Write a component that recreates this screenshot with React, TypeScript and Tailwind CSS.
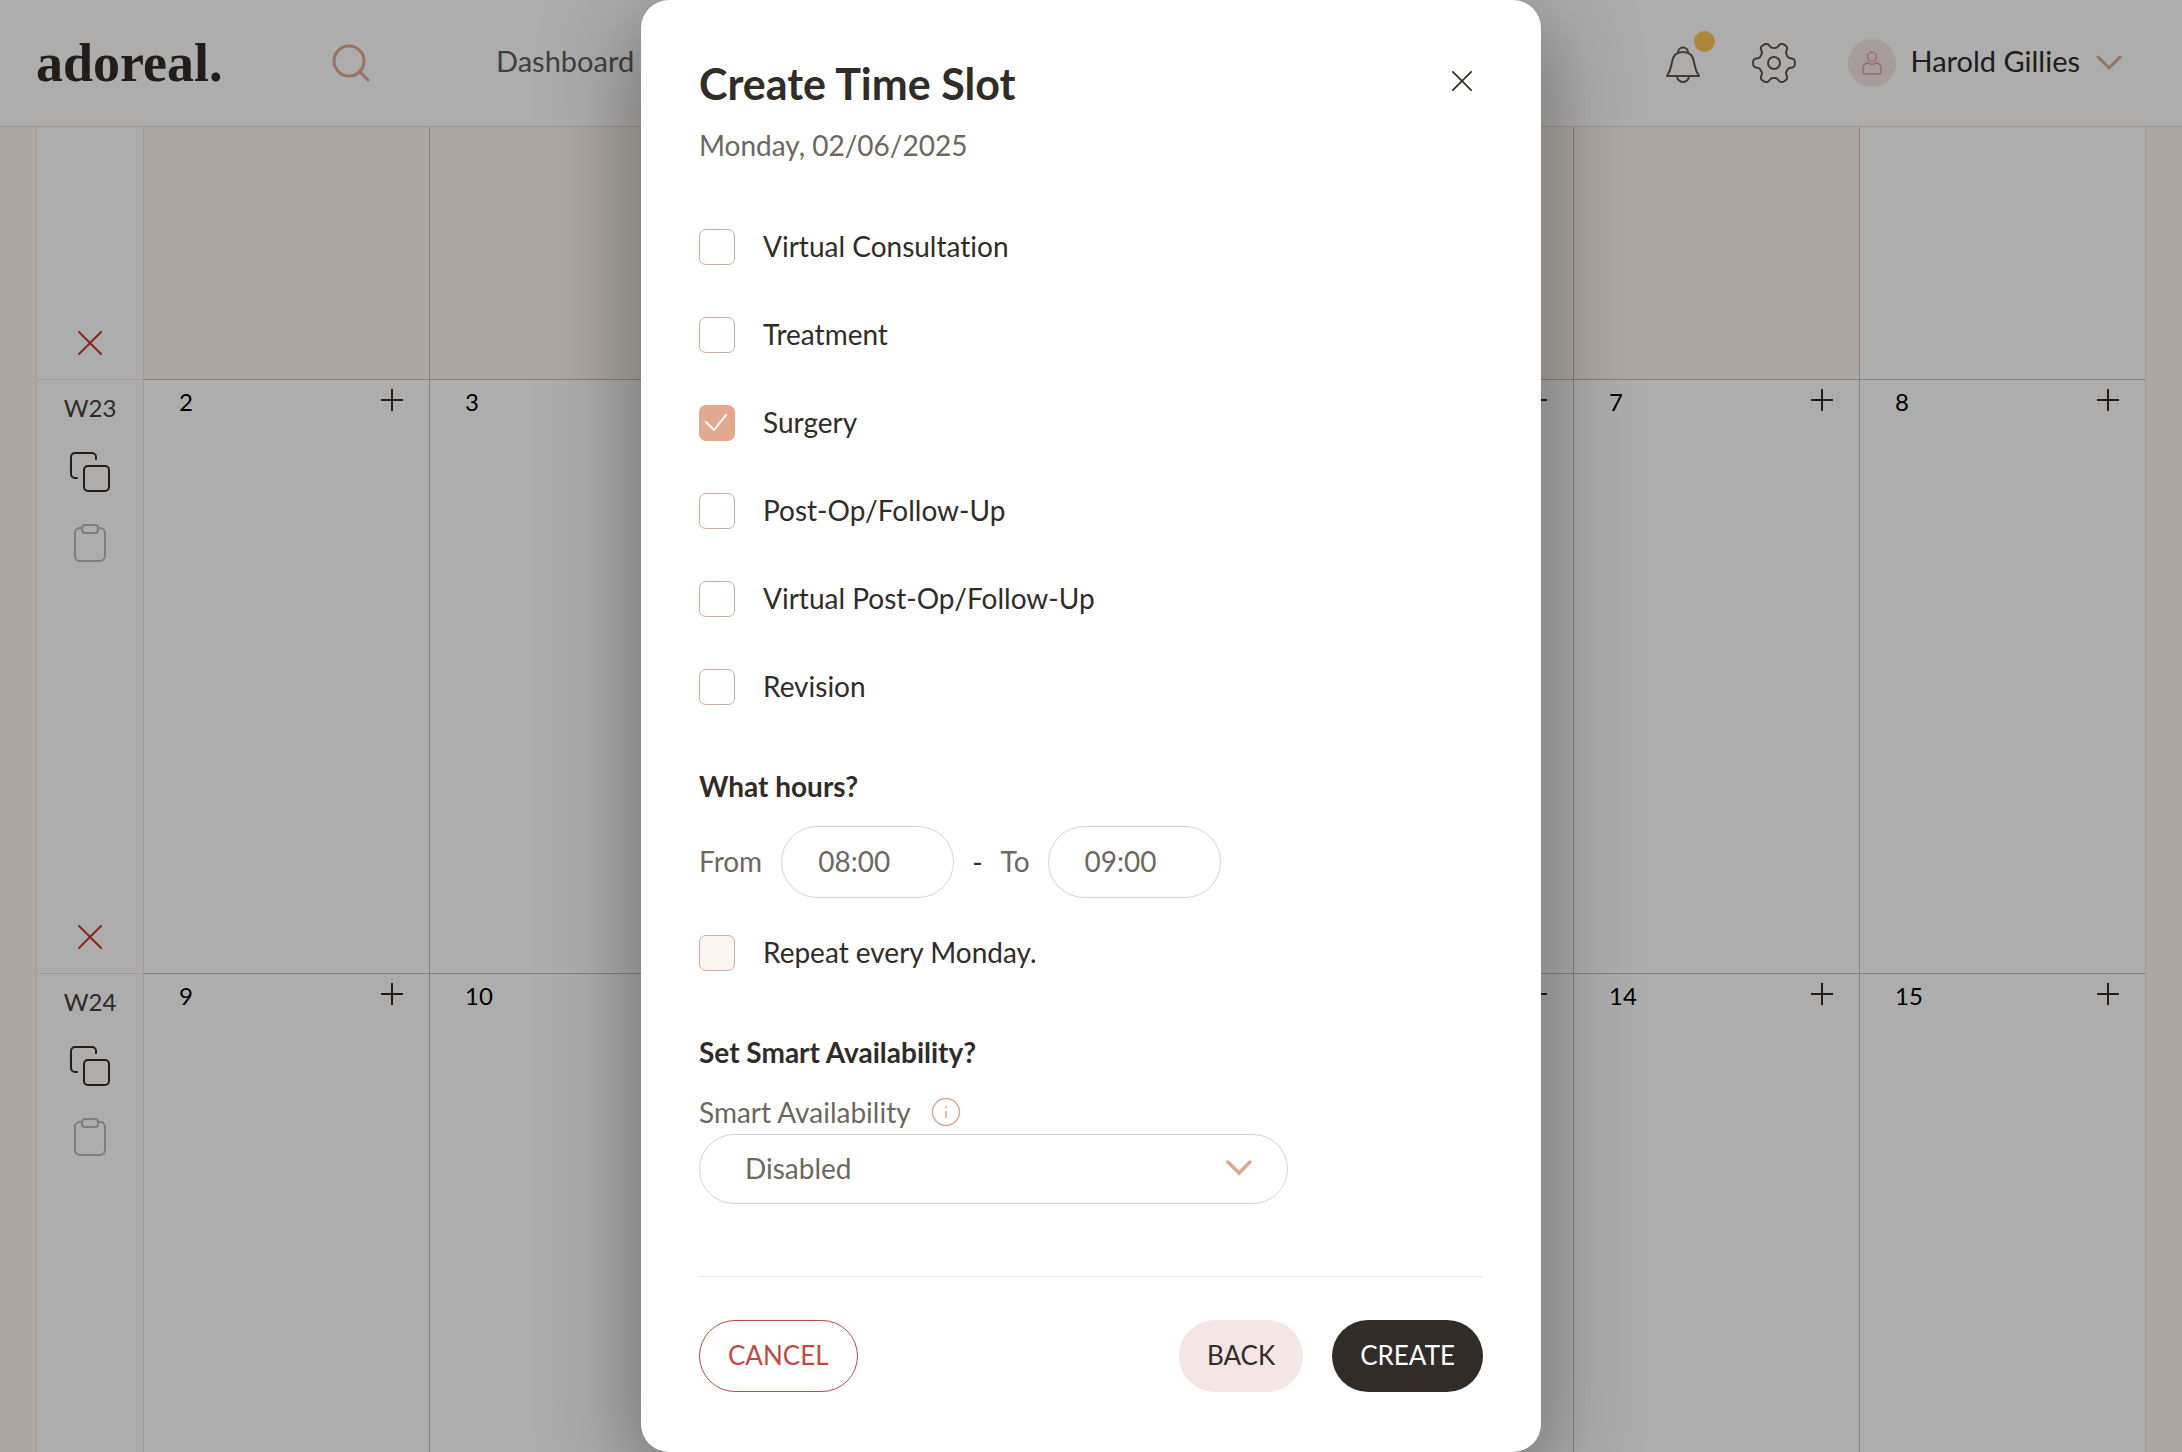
import React, { useState } from "react";

const weeks = [
  { label: "W22", first: 26, outside: true },
  { label: "W23", first: 2, outside: false },
  { label: "W24", first: 9, outside: false },
];

// Six-lobed cog outline centred in a 44x44 box, with lobes on the left and right.
const cogOutline =
  Array.from({ length: 180 }, (_, i) => {
    const a = (i / 180) * Math.PI * 2;
    const r = 18 + 3 * Math.tanh(2 * Math.cos(6 * a));
    return `${i === 0 ? "M" : "L"}${(22 + r * Math.cos(a)).toFixed(2)} ${(22 + r * Math.sin(a)).toFixed(2)}`;
  }).join("") + "Z";

function Cross({ className }: { className: string }) {
  return (
    <svg viewBox="0 0 24 24" className={className} fill="none" stroke="currentColor" strokeLinecap="round">
      <path d="M1 1 23 23M23 1 1 23" />
    </svg>
  );
}

function Chevron({ className }: { className: string }) {
  return (
    <svg viewBox="0 0 26 16" className={className} fill="none" stroke="currentColor" strokeLinecap="round">
      <path d="M2 2 13 13 24 2" />
    </svg>
  );
}

function CopyIcon() {
  return (
    <svg viewBox="0 0 40 40" className="size-10" fill="none" stroke="currentColor" strokeWidth="2" strokeLinecap="round">
      <path d="M7 26H5a4 4 0 0 1-4-4V5a4 4 0 0 1 4-4h17a4 4 0 0 1 4 4v2" />
      <rect x="14" y="14" width="25" height="25" rx="4" />
    </svg>
  );
}

function PasteIcon() {
  return (
    <svg viewBox="0 0 32 38" className="h-[38px] w-8" fill="none" stroke="currentColor" strokeWidth="2">
      <path d="M8 4H6a5 5 0 0 0-5 5v23a5 5 0 0 0 5 5h20a5 5 0 0 0 5-5V9a5 5 0 0 0-5-5h-2" />
      <rect x="8" y="1" width="16" height="8" rx="3" />
    </svg>
  );
}

function Header() {
  return (
    <header className="flex h-[127px] shrink-0 items-center border-b border-[#efdcd8] bg-white px-9">
      <a href="#home" className="w-[296px] font-['Liberation_Serif',serif] text-[54px] leading-none font-bold text-[#322c29]">
        adoreal.
      </a>
      <button aria-label="Search" className="w-[164px] text-[#e2a98f]">
        <svg viewBox="0 0 38 38" className="size-[38px]" fill="none" stroke="currentColor" strokeWidth="3" strokeLinecap="round">
          <circle cx="17" cy="17" r="15" />
          <path d="m28 28 8 8" />
        </svg>
      </button>
      <a href="#dashboard" className="pb-1 text-[29px] text-[#625f5b]">Dashboard</a>
      <div className="ml-auto flex items-center">
        <button aria-label="Notifications" className="relative text-[#5d5853]">
          <svg viewBox="0 0 34 40" className="h-10 w-[34px]" fill="none" stroke="currentColor" strokeWidth="2" strokeLinejoin="round">
            <path d="M1 33c4-6 4-9 5-14C7 12 11 9 17 9s10 3 11 10c1 5 1 8 5 14zM12 9.500a5 5 0 1 1 10 0M11 33a6 6 0 0 0 12 0" />
          </svg>
          <span className="absolute -top-3 left-7 size-[21px] rounded-full bg-[#fec657]" />
        </button>
        <button aria-label="Settings" className="ml-[52px] text-[#5d5853]">
          <svg viewBox="0 0 44 44" className="size-11" fill="none" stroke="currentColor" strokeWidth="2" strokeLinejoin="round">
            <path d={cogOutline} />
            <circle cx="22" cy="22" r="6" />
          </svg>
        </button>
        <button className="mr-6 ml-[52px] flex items-center text-[29px] text-[#322c29]">
          <span className="mr-[14px] flex size-12 items-center justify-center rounded-full bg-[#f4e6e5] text-[#dc9c91]">
            <svg viewBox="0 0 22 26" className="h-6 w-5" fill="none" stroke="currentColor" strokeWidth="1.500">
              <circle cx="11" cy="6" r="5" />
              <path d="M5 13h2c2 2 6 2 8 0h2c3 1 4 3 4 7v2c0 2-1 3-3 3H4c-2 0-3-1-3-3v-2c0-4 1-6 4-7z" />
            </svg>
          </span>
          <span className="pb-1">Harold Gillies</span>
          <Chevron className="ml-4 h-4 w-[26px] stroke-3 text-[#e2a98f]" />
        </button>
      </div>
    </header>
  );
}

function Calendar() {
  return (
    <main className="flex min-h-0 flex-1 flex-col overflow-hidden bg-[#fef6f0] px-9">
      <table className="w-full table-fixed border-collapse bg-white">
        <colgroup>
          <col className="w-[107px]" />
          <col span={7} />
        </colgroup>
        <tbody>
          {weeks.map((week, i) => (
            <tr key={week.label}>
              <th className="border-x border-b border-[#eee6e5] p-0 align-top font-normal">
                <div
                  className={
                    i === 0
                      ? "flex h-[252px] flex-col items-center justify-end pb-6"
                      : i === 1
                        ? "flex h-[593px] flex-col items-center pt-3 pb-6"
                        : "flex h-[593px] flex-col items-center pt-3"
                  }
                >
                  {i > 0 && (
                    <>
                      <span className="text-2xl leading-8 text-[#45403c]">{week.label}</span>
                      <button aria-label="Copy week" className="mt-7 text-[#322c29]"><CopyIcon /></button>
                      <button aria-label="Paste week" className="mt-8 text-[#b9b9b9]"><PasteIcon /></button>
                    </>
                  )}
                  {i < 2 && (
                    <button aria-label="Clear week" className="mt-auto text-[#c0392b]">
                      <Cross className="size-6 stroke-2" />
                    </button>
                  )}
                </div>
              </th>
              {Array.from({ length: 7 }, (_, d) => (
                <td
                  key={d}
                  className={
                    week.outside && d < 6
                      ? "border-r border-b border-[#c0c0c0] bg-[#fef6f0] p-0"
                      : d < 6
                        ? "border-r border-b border-[#c0c0c0] p-0 align-top"
                        : "border-r border-b border-r-[#f0e4de] border-b-[#c0c0c0] p-0 align-top"
                  }
                >
                  {!week.outside && (
                    <div className="flex items-start justify-between pt-1.5 pr-[26px] pl-[35px]">
                      <span className="text-2xl leading-8 text-black">{week.first + d}</span>
                      <button aria-label="Add slot" className="mt-[3px] text-[#322c29]">
                        <svg viewBox="0 0 22 22" className="size-[22px]" stroke="currentColor" strokeWidth="2">
                          <path d="M11 0v22M0 11h22" />
                        </svg>
                      </button>
                    </div>
                  )}
                </td>
              ))}
            </tr>
          ))}
        </tbody>
      </table>
    </main>
  );
}

function Check({ label, checked, tinted, onChange }: { label: string; checked: boolean; tinted?: boolean; onChange: () => void }) {
  return (
    <label className="flex h-[38px] items-center gap-7 text-[28px] text-[#322c29]">
      <span className="relative size-9 shrink-0">
        <input
          type="checkbox"
          checked={checked}
          onChange={onChange}
          className={
            tinted
              ? "block size-full appearance-none rounded-[7px] border border-[#d3ada0] bg-[#fdf5f1] checked:bg-[#e2a98f]"
              : "block size-full appearance-none rounded-[7px] border border-[#d0aa9e] bg-white checked:border-[#e2a98f] checked:bg-[#e2a98f]"
          }
        />
        {checked && (
          <svg viewBox="0 0 36 36" className="pointer-events-none absolute inset-0 text-white" fill="none" stroke="currentColor" strokeWidth="2" strokeLinecap="round" strokeLinejoin="round">
            <path d="m7 17 8 8L27 10" />
          </svg>
        )}
      </span>
      <span className="pb-0.5">{label}</span>
    </label>
  );
}

const slotTypes = ["Virtual Consultation", "Treatment", "Surgery", "Post-Op/Follow-Up", "Virtual Post-Op/Follow-Up", "Revision"];

function SlotDialog() {
  const [picked, setPicked] = useState<string[]>(["Surgery"]);
  const [repeat, setRepeat] = useState(false);
  const toggle = (t: string) => setPicked((p) => (p.includes(t) ? p.filter((x) => x !== t) : [...p, t]));

  return (
    <section
      role="dialog"
      aria-labelledby="slot-title"
      className="flex min-h-full w-full max-w-[900px] flex-col rounded-[28px] bg-white px-[58px] pt-[57px] pb-14 text-[28px] text-[#322c29] shadow-[0_24px_90px_8px_rgba(0,0,0,0.34)]"
    >
      <div className="flex items-start justify-between">
        <h1 id="slot-title" className="text-[43px] leading-[54px] font-bold">Create Time Slot</h1>
        <button aria-label="Close" className="mt-[14px] mr-[11px]">
          <Cross className="size-5 stroke-2" />
        </button>
      </div>
      <p className="mt-4 leading-9 text-[#6d675f]">Monday, 02/06/2025</p>

      <div className="mt-[65px] flex flex-col gap-[50px]">
        {slotTypes.map((t) => (
          <Check key={t} label={t} checked={picked.includes(t)} onChange={() => toggle(t)} />
        ))}
      </div>

      <h2 className="mt-[62px] leading-9 font-bold">What hours?</h2>
      <div className="mt-[22px] flex items-center text-[#6d675f]">
        <label htmlFor="from" className="mr-[19px] pb-0.5">From</label>
        <input id="from" defaultValue="08:00" className="h-[72px] w-[173px] rounded-full border border-[#dcd2d0] pb-0.5 pl-9" />
        <span className="mx-[18px] text-[#322c29]">-</span>
        <label htmlFor="to" className="mr-[18px] pb-0.5">To</label>
        <input id="to" defaultValue="09:00" className="h-[72px] w-[173px] rounded-full border border-[#dcd2d0] pb-0.5 pl-9" />
      </div>
      <div className="mt-9">
        <Check label="Repeat every Monday." checked={repeat} tinted onChange={() => setRepeat(!repeat)} />
      </div>

      <h2 className="mt-[62px] leading-9 font-bold">Set Smart Availability?</h2>
      <div className="mt-6 flex items-center gap-5 leading-9 text-[#6d675f]">
        <label htmlFor="smart">Smart Availability</label>
        <svg viewBox="0 0 30 30" className="size-[30px] text-[#dba993]" fill="none" stroke="currentColor" strokeWidth="1.500">
          <circle cx="15" cy="15" r="13.500" />
          <path d="M15 14v7M15 9v2" />
        </svg>
      </div>
      <div className="relative mt-1 w-[589px] max-w-full">
        <select id="smart" className="h-[70px] w-full appearance-none rounded-full border border-[#d2d2d2] bg-white pb-0.5 pl-[45px] text-[#6d675f]">
          <option>Disabled</option>
          <option>Enabled</option>
        </select>
        <Chevron className="pointer-events-none absolute top-[26px] right-9 h-4 w-[26px] stroke-[3.5] text-[#e0a590]" />
      </div>

      <footer className="mt-[72px] flex gap-[29px] border-t border-[#e6e6e6] pt-[43px] text-[26px]">
        <button className="mr-auto h-[72px] rounded-full border border-[#bd4c44] px-7 pb-0.5 text-[#bd4c44]">CANCEL</button>
        <button className="h-[72px] rounded-full bg-[#f4e6e5] px-7 pb-0.5">BACK</button>
        <button className="h-[72px] rounded-full bg-[#322c29] px-7 pb-0.5 text-white">CREATE</button>
      </footer>
    </section>
  );
}

export default function App() {
  return (
    <div className="relative h-screen overflow-hidden font-['Lato',sans-serif] [font-variant-ligatures:none]">
      <div className="flex h-full flex-col">
        <Header />
        <Calendar />
      </div>
      <div className="absolute inset-0 flex justify-center bg-black/32">
        <SlotDialog />
      </div>
    </div>
  );
}
